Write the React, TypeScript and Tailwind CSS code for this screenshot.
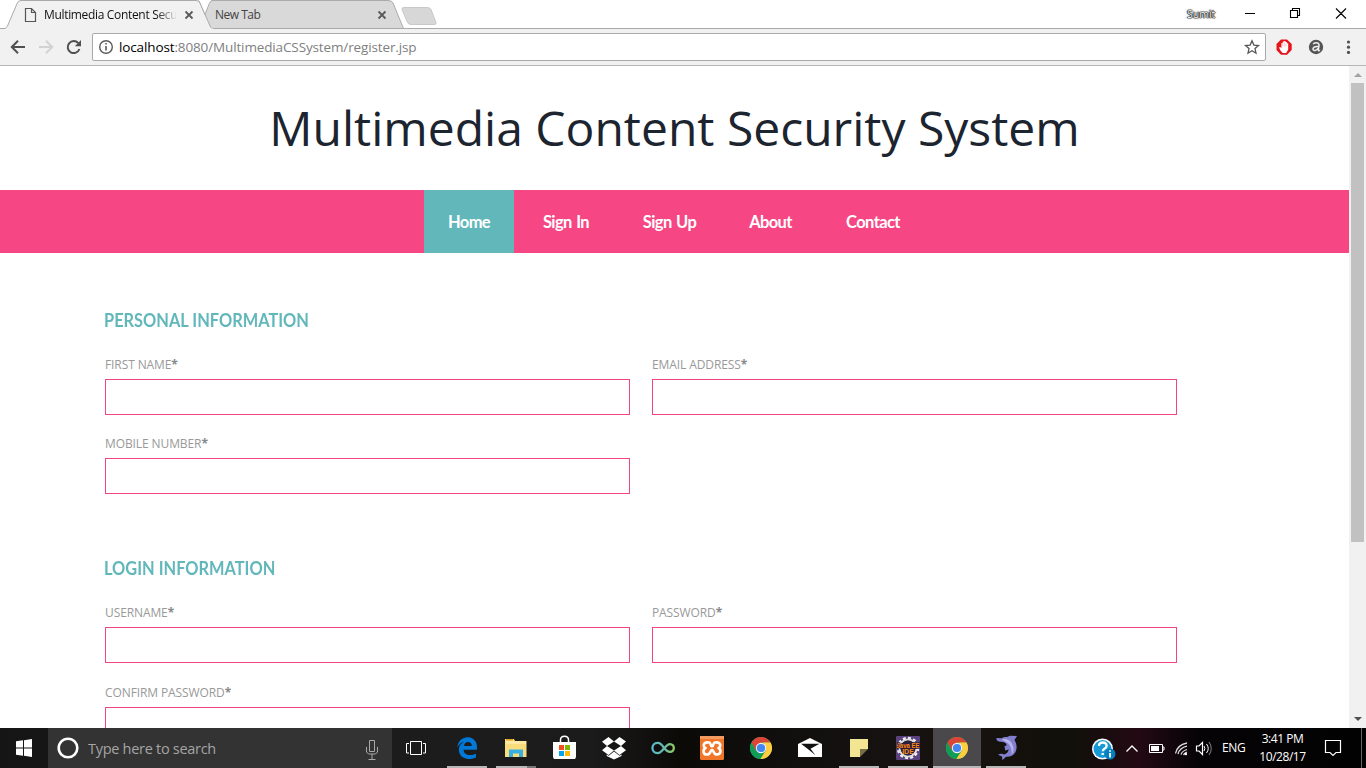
import React from "react";

const OPEN = "font-['Open_Sans','Noto_Sans',sans-serif]";
const LATO = "font-['Lato','Open_Sans',sans-serif]";

function Toolbar() {
  return (
    <div className="flex h-9 items-center bg-[#f1f1f1]">
      <svg width="92" height="36" viewBox="0 29 92 36" fill="none" className="shrink-0">
        <path d="M25 47H12.5M18 40.8L11.8 47L18 53.2" stroke="#505050" strokeWidth="2" />
        <path d="M39 47H51.5M46 40.8L52.2 47L46 53.2" stroke="#d2d2d2" strokeWidth="2" />
        <path d="M78.3 43.2A6 6 0 1 0 79.4 49" stroke="#505050" strokeWidth="2" />
        <path d="M81 40v6.2h-6.2z" fill="#505050" />
      </svg>
      <div className="flex h-7 w-[1174px] shrink-0 items-center rounded-[2px] border border-[#a9a9a9] bg-white">
        <svg width="26" height="26" viewBox="93 34 26 26" fill="none" className="shrink-0">
          <circle cx="106" cy="47" r="6.3" stroke="#5a5a5a" strokeWidth="1.4" />
          <path d="M106 46v4.5M106 43v1.6" stroke="#5a5a5a" strokeWidth="1.6" />
        </svg>
        <span className={`${OPEN} w-[1120px] text-[13.5px] leading-5 whitespace-nowrap text-[#808080]`}>
          <span className="inline-block tracking-[-0.13px]"><span className="text-black">localhost</span>:8080/MultimediaCSSystem/register.jsp</span>
        </span>
        <svg width="26" height="26" viewBox="1239 34 26 26" fill="none" className="shrink-0">
          <path d="M1252 40.8l1.9 4.3 4.6.4-3.5 3.1 1 4.6-4-2.4-4 2.4 1-4.6-3.5-3.1 4.6-.4z" stroke="#555" strokeWidth="1.3" />
        </svg>
      </div>
      <svg width="100" height="36" viewBox="1266 29 100 36" className="shrink-0">
        <path d="M1281 39.5h6l4.7 4.5v6l-4.7 4.7h-6l-4.5-4.7v-6z" fill="#e5141b" />
        <path d="M1279 47.5l1.2-.6 1.200 1.300V43h1.300v-1.400h1.400V41h1.400v1h1.400v1.200h1.300v6.300l-2 3.500h-3.500l-2.200-2.500z" fill="#fff" />
        <path d="M1282.700 43v3.500M1284.300 42.500v4M1286 43.500v3" stroke="#e77" strokeWidth=".4" />
        <circle cx="1316" cy="47" r="7.200" fill="#555" />
        <path d="M1313 44q3-2 5.400-.5 1 .8.6 2.500l-.7 4.200q0 1 1.800.2M1318.500 46.500q-5-.5-5.500 2.200 0 2 2.300 1.700 2-.5 2.800-2.400" stroke="#eee" strokeWidth="1.500" fill="none" />
        <g fill="#505050"><circle cx="1348.500" cy="42" r="1.600" /><circle cx="1348.500" cy="47.200" r="1.600" /><circle cx="1348.500" cy="52.400" r="1.600" /></g>
      </svg>
    </div>
  );
}

function TabStrip() {
  return (
    <div className="relative h-[29px] bg-white">
      <svg width="1366" height="29" viewBox="0 0 1366 29" fill="none" className="block">
        <path d="M0 28.5H1366" stroke="#aaa" />
        <path d="M211 28.5L205 14L209 3Q210 .5 213 .5H388Q392 .5 393 3L403.5 28.5" fill="#d9d9d9" />
        <path d="M203 .5H388Q392 .5 393 3L403.5 28.5H211" stroke="#aaa" />
        <path d="M200 1H212V14H205z" fill="#d9d9d9" />
        <path d="M0 29V28.5H5Q6.5 28.5 7.3 26.5L17.3 3Q18.3.5 21 .5H196Q199 .5 200 3L210.5 26.5Q211.3 28.5 213 28.5V29z" fill="#f1f1f1" />
        <path d="M0 28.5H5L7.3 26.5L17.3 3Q18.3.5 21 .5H196Q199 .5 200 3L210.5 27L212 28.5" stroke="#aaa" />
        <path d="M211 1L205 14.500L200 3L200 0H212z" fill="#fff" />
        <path d="M198 .5Q199.500 1 200 3L205 14.500L209.500 3Q210.500 .5 213 .5" stroke="#aaa" />
        <path d="M404 7.5H427.5Q430 7.5 431 9.5L436 22.5Q436.5 24.5 434 24.5H411Q408.5 24.5 407.5 22.5L402 9.5Q401.5 7.5 404 7.5z" fill="#d7d7d7" stroke="#c8c8c8" />
        <path d="M25.5 8.5h6l4 4v9h-10zM31.5 8.5v4h4" stroke="#555" strokeWidth="1.2" />
        <path d="M185.5 11.5l7 7m0-7l-7 7M378.500 11.500l7 7m0-7l-7 7" stroke="#5a5a5a" strokeWidth="1.8" />
        <path d="M1245 13.5h10M1290.500 10.500h7v7h-7zM1292.500 10.500v-2h7v7h-2M1336 8.500l10 10m0-10l-10 10" stroke="#000" strokeWidth="1.1" />
      </svg>
      <div className={`${OPEN} absolute inset-0 text-[12px] leading-[29px] whitespace-nowrap`}>
        <span className="absolute left-11 w-[132px] overflow-hidden tracking-[-0.33px] text-[#111] [mask-image:linear-gradient(to_right,black_112px,transparent_134px)]">Multimedia Content Security</span>
        <span className="absolute left-[215px] tracking-[-0.5px] text-[#444]">New Tab</span>
        <span className="absolute left-[1187px] text-[10.5px] leading-[28px] text-white [text-shadow:0_0_1px_#000,0_0_1px_#000,0_0_1px_#111,0_0_1px_#000,0_0_2px_#333]">Sumit</span>
      </div>
    </div>
  );
}

function Field({ label }: { label: string }) {
  return (
    <label className="block h-[79.5px] w-[525px]">
      <span className={`${OPEN} block h-[25px] text-[12px] leading-[21px] tracking-[-0.1px] whitespace-nowrap text-[#999]`}>{label}<b className="font-bold text-[#888]">*</b></span>
      <input className="block h-9 w-[525px] border border-[#f44583] bg-white px-2 outline-none" />
    </label>
  );
}

function Section({ title, fields }: { title: string; fields: string[] }) {
  return (
    <section className="h-[248.5px]">
      <h3 className={`${LATO} -ml-px h-[45px] origin-left scale-x-[0.91] text-[18px] leading-[23px] font-bold whitespace-nowrap text-[#62b7bb]`}>{title}</h3>
      <div className="grid grid-cols-[525px_525px] gap-x-[22px]">
        {fields.map((f) => <Field key={f} label={f} />)}
      </div>
    </section>
  );
}

const NAV = [
  { label: "Home", cls: "w-[90px] bg-[#62b7bb]" },
  { label: "Sign In", cls: "w-[104px]" },
  { label: "Sign Up", cls: "w-[103px]" },
  { label: "About", cls: "w-[99px]" },
  { label: "Contact", cls: "w-[106px]" },
];

function Page() {
  return (
    <div className="flex h-[662px] overflow-hidden">
      <main className="w-[1349px] shrink-0 overflow-hidden bg-white">
        <h1 className={`${OPEN} h-[124px] text-center text-[48px] leading-[124px] whitespace-nowrap text-[#1b242f]`}>Multimedia Content Security System</h1>
        <nav className={`${LATO} flex h-[63px] bg-[#f64784] pl-[424px] text-[16.5px] leading-[64px] font-bold tracking-[-0.6px] [word-spacing:1px] text-white`}>
          {NAV.map((n) => <a key={n.label} className={`${n.cls} block h-[63px] text-center whitespace-nowrap`}>{n.label}</a>)}
        </nav>
        <div className="pt-[55.9px] pl-[105px]">
          <Section title="PERSONAL INFORMATION" fields={["FIRST NAME", "EMAIL ADDRESS", "MOBILE NUMBER"]} />
          <Section title="LOGIN INFORMATION" fields={["USERNAME", "PASSWORD", "CONFIRM PASSWORD"]} />
        </div>
      </main>
      <div className="flex w-[17px] flex-col items-center bg-[#f1f1f1]">
        <svg width="17" height="17" className="shrink-0"><path d="M5 11h8L9 7z" fill="#a3a3a3" /></svg>
        <div className="h-[459px] w-[13px] bg-[#c1c1c1]" />
        <div className="grow" />
        <svg width="17" height="17" className="shrink-0"><path d="M5 6h8l-4 4z" fill="#505050" /></svg>
      </div>
    </div>
  );
}

function Chrome({ cx }: { cx: number }) {
  return (
    <g transform={`translate(${cx} 20)`}>
      <circle r="11" fill="#4caf50" />
      <path d="M-9.5-5.5A11 11 0 0 1 9.5-5.5H0L-5 3z" fill="#db4437" />
      <path d="M9.5-5.5A11 11 0 0 1-.8 11L5 2.5 2-5.5z" fill="#ffcd40" />
      <path d="M-9.5-5.5A11 11 0 0 0-.8 11L4 3-5 3z" fill="#0f9d58" />
      <circle r="5.2" fill="#f1f1f1" /><circle r="4.1" fill="#4285f4" />
    </g>
  );
}

function TaskIcons() {
  return (
    <svg width="640" height="40" viewBox="392 0 640 40" fill="none" className="shrink-0">
      <rect x="933" width="48" height="40" fill="#4b484b" />
      <path d="M410.500 13.500h11v13h-11zM409 15.500h-2.500v9.500H409M423 15.500h2.500v9.500H423" stroke="#fff" />
      <path d="M457.3 19.5C458 12.5 463 9 468 9.2c6 .2 9 4.8 9 10v2.6h-13.500c.4 3.700 3 5.200 6.200 5.200 2.500 0 4.800-.7 6.300-1.600v4.200c-2 1.100-4.600 1.600-7.500 1.400-6-.4-9.700-4-9.700-9.200 0-3.800 2-6.300 5.200-8-3 .8-5.200 2.900-6.700 5.700zM464 18h7.800c0-2.600-1.500-4-3.800-4-2.200 0-3.600 1.600-4 4z" fill="#0078d7" fillRule="evenodd" />
      <path d="M505 11h9l1 2h11.500v16H505z" fill="#f9dd7d" /><path d="M506 13h20v3h-20z" fill="#ffe9a2" /><path d="M506 11h7v1.500h-7z" fill="#dba520" />
      <path d="M509 21.500h14V29h-4v-3.500h-6V29h-4z" fill="#39b1e0" />
      <path d="M560.500 14v-2c0-5 8-5 8 0v2" stroke="#fff" strokeWidth="1.5" /><path d="M553 14h23v15l-1 2h-21l-1-2z" fill="#fff" />
      <path d="M559 17h5v5h-5z" fill="#f25022" /><path d="M565 17h5v5h-5z" fill="#7fba00" /><path d="M559 23h5v5h-5z" fill="#00a4ef" /><path d="M565 23h5v5h-5z" fill="#ffb900" />
      <path d="M608.500 9l5.500 4.500-7 4.500-5-4.300zM619.500 9l6.500 4.500-5 4.500-7-4.500zM602 22.300l5-4.300 7 4.500-5.500 4.500zM626 22.300l-5-4.300-7 4.500 5.500 4.500zM614 23.500l5.500 4.200 2-1.100v1.500L614 31.500l-7.300-3.400v-1.500l2 1.100z" fill="#fff" />
      <defs><linearGradient id="inf" x1="651" x2="675" gradientUnits="userSpaceOnUse"><stop stopColor="#55bccc" /><stop offset=".55" stopColor="#68b7ad" /><stop offset="1" stopColor="#91d05a" /></linearGradient></defs>
      <path d="M664 20c-2-3.500-4-5.200-6.300-5.200-7 0-7 10.400 0 10.400 5 0 7.500-9 12.200-9 5.200 0 5.200 7.600 0 7.600-2.500 0-3.800-1.300-5.900-3.800z" stroke="url(#inf)" strokeWidth="2.300" />
      <rect x="700" y="8" width="24" height="24" rx="1.500" fill="#f2762a" /><rect x="700" y="8" width="24" height="3" fill="#f39a60" />
      <path d="M709 14.500c-6-1-6.500 4.500-3.500 5.500-3 1.500-2.500 7 1.500 6.500 4 0 3-4.500 5-4.500s1 4.500 5 4.500 4.500-5 1.500-6.500c3-1 2.500-6.500-3.500-5.500-2.500.5-1 4-3 4s-.5-3.500-3-4z" stroke="#fff" strokeWidth="2.600" strokeLinejoin="round" />
      <Chrome cx={761} />
      <path d="M798 16l12-6 12 6v13h-24z" fill="#fff" /><path d="M801 15.700h18.500l-9 5 5 6.500-7-5.700z" fill="#111" />
      <path d="M850 11h18v10h-8v8h-10z" fill="#f2e694" /><path d="M860 21h8l-8 8z" fill="#776f46" />
      <rect x="896" y="8" width="24" height="24" rx="1" fill="#59427d" />
      <circle cx="908" cy="20" r="10" stroke="#eee" strokeWidth="2.500" strokeDasharray="3 2.200" /><circle cx="908" cy="20" r="8.500" stroke="#ddd" strokeWidth="2" /><circle cx="908" cy="20" r="7.500" fill="#27213d" />
      <g fill="#ff8a1c" fontFamily="Liberation Sans" fontWeight="bold" fontSize="7" textAnchor="middle"><text x="908" y="19.500" textLength="23" lengthAdjust="spacingAndGlyphs" stroke="#2b1a30" strokeWidth="1.500" paintOrder="stroke">Java EE</text><text x="908" y="26">IDE</text></g>
      <Chrome cx={957} />
      <path d="M996.500 10l5 .3c2-1 3.500-1.500 5.500-1.200l3-1.300 7 .2-2.500 4c2.500 4 2.800 8.500 1 12-2 3.500-5.500 5-9 4.800-1.500.5-2.500 2.500-4.200 3.200l-.3-3.500-4-1.800c2-1.200 4.500-1.200 6.200-.2 2.500-.5 4-2.500 4.500-5l-3.500 1-.7-4.500 2.200-.5c0-1.500-1.200-2.600-2.700-3.200l-5-.8c-1.800-.5-3-1.800-2.500-3.500z" fill="#817fce" />
      <path d="M1002 11.500c6-2 10.500 2.500 11.500 8.500.3 3-.5 5-2 6.500.8-6-1.500-11-6.500-13z" fill="#b6b4ea" />
      <g fill="#b7b7b7"><path d="M447 38h40v2h-40zM496 38h31v2h-31zM839 38h40v2h-40zM888 38h40v2h-40zM933 38h48v2h-48zM986 38h40v2h-40z" /><path d="M527 38h9v2h-9z" fill="#777" /></g>
    </svg>
  );
}

function Taskbar() {
  return (
    <footer className="flex h-10 bg-[linear-gradient(90deg,#151515_0,#1c1c1c_420px,#1b1b1b_590px,#0c0a07_680px,#131110_830px,#17120f_970px,#11100a_1070px,#230914_1140px,#050305_1200px,#030203_1366px)]">
      <svg width="48" height="40" className="shrink-0"><path d="M16 13.300l7-1v7.200h-7zM24 12.200l8-1.200v8.500h-8zM16 20.500h7v7.200l-7-1zM24 20.500h8V29l-8-1.200z" fill="#fff" /></svg>
      <div className={`${OPEN} flex w-[344px] shrink-0 items-center bg-[#333] text-[14.5px] tracking-[-0.29px] text-[#a5a5a5]`}>
        <svg width="40" height="40" className="shrink-0"><circle cx="20" cy="20" r="9.300" stroke="#fff" strokeWidth="2.600" fill="none" /></svg>
        <span className="grow pt-[2px] whitespace-nowrap">Type here to search</span>
        <svg width="40" height="40" fill="none" className="shrink-0"><path d="M17.500 12.500h5v11h-5zM14.500 19v5l2 2h7l2-2v-5M20 26v5M16.500 31.500h7" stroke="#a9a9a9" /></svg>
      </div>
      <TaskIcons />
      <svg width="184" height="40" viewBox="1032 0 184 40" fill="none" className="shrink-0">
        <circle cx="1102.500" cy="21" r="10.500" fill="#fff" /><circle cx="1102.500" cy="21" r="9" fill="#1699d6" />
        <path d="M1099 18q0-3.500 3.800-3.500t3.800 3.500q0 1.500-2.500 3-1.300.8-1.300 2.300M1102.700 25v2" stroke="#fff" strokeWidth="2.300" />
        <circle cx="1110" cy="26" r="5.500" fill="#087fbd" /><path d="M1110 25v4.500M1110 22.300v1.500" stroke="#fff" strokeWidth="1.800" />
        <path d="M1126.500 23.500l5.500-5.500 5.500 5.500" stroke="#fff" strokeWidth="1.300" />
        <path d="M1149.500 16.500h13v8h-13zM1163 19h1v3h-1" stroke="#fff" /><path d="M1151 18h8v5h-8z" fill="#fff" />
        <path d="M1175.500 25.500q1.500-8.500 11.500-10.500M1178 26q1.500-6 9-7.800M1181 26.500q1-3.500 6-5M1183.500 27q.5-1.800 3.500-3" stroke="#ddd" strokeWidth="1.300" /><circle cx="1185.800" cy="26" r="1.300" fill="#fff" />
        <path d="M1196.500 18v5h2.500l3.500 3.500v-12l-3.500 3.500z" stroke="#fff" strokeWidth="1.200" /><path d="M1204 18q1.700 2.500 0 5M1206.500 16q3.500 4.500 0 9" stroke="#fff" /><path d="M1209 14q4.500 6.500 0 13" stroke="#888" />
      </svg>
      <span className={`${OPEN} w-[36px] shrink-0 pl-[6px] text-[12px] leading-[40px] tracking-[-0.4px] text-white`}>ENG</span>
      <div className={`${OPEN} flex w-[60px] shrink-0 flex-col items-center pt-[2px] pl-px text-[12px] leading-[18px] tracking-[-0.45px] whitespace-nowrap text-white`}><span>3:41 PM</span><span>10/28/17</span></div>
      <svg width="54" height="40" viewBox="1312 0 54 40" fill="none" className="shrink-0"><path d="M1325.500 12.500h15v12h-4.500l-3 3-3-3h-4.500z" stroke="#fff" strokeWidth="1.200" /><path d="M1361.500 0v40" stroke="#666" /></svg>
    </footer>
  );
}

export default function App() {
  return (
    <div className="h-[768px] w-[1366px] overflow-hidden bg-white">
      <TabStrip />
      <div className="h-[37px] border-b border-[#b6b6b6]"><Toolbar /></div>
      <Page />
      <Taskbar />
    </div>
  );
}
